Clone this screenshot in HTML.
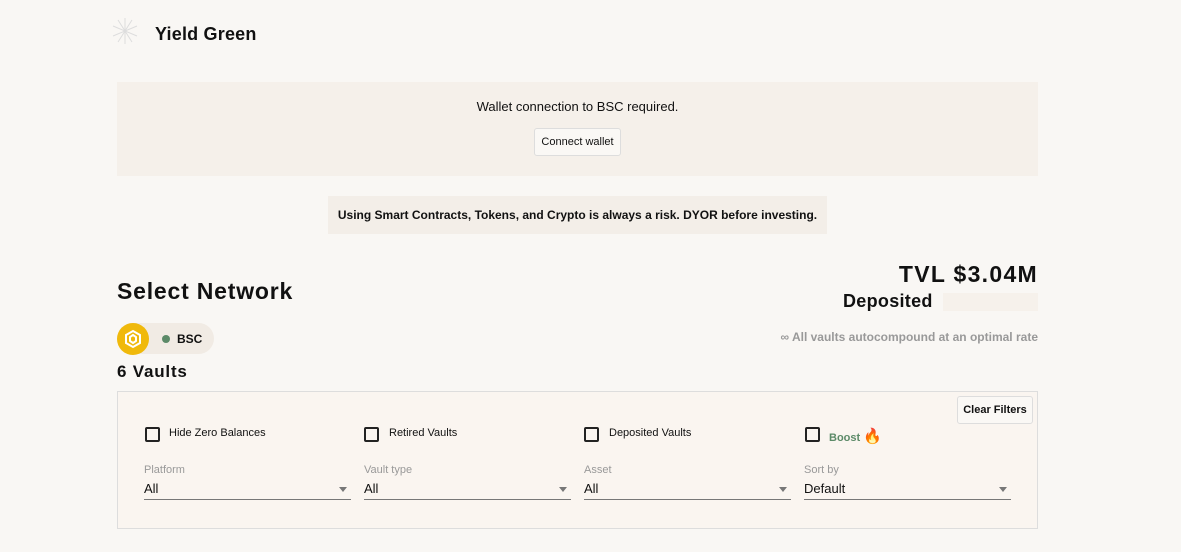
<!DOCTYPE html>
<html><head><meta charset="utf-8"><style>
*{box-sizing:border-box;margin:0;padding:0}
body{width:1181px;height:552px;background:#f9f7f4;font-family:"Liberation Sans",sans-serif;color:#111;position:relative;overflow:hidden}
.a{position:absolute;white-space:nowrap}
.cb{position:absolute;width:15px;height:15px;border:2px solid #222;border-radius:2px}
.lbl{font-size:11px;color:#999}
.sel{position:absolute;width:207px;height:19px;border-bottom:1px solid #777;font-size:13px}
.sel:after{content:"";position:absolute;right:4px;top:6px;border:4px solid transparent;border-top:5px solid #777}
</style></head><body>
<svg class="a" style="left:110px;top:16px" width="30" height="30" viewBox="0 0 30 30" stroke="#ddd" stroke-width="1"><g transform="translate(15,15)"><line x1="0" y1="-13" x2="0" y2="13"/><line x1="-12" y1="-5" x2="12" y2="5"/><line x1="-12" y1="5" x2="12" y2="-5"/><line x1="-7" y1="-11" x2="7" y2="11"/><line x1="-7" y1="11" x2="7" y2="-11"/></g></svg>
<div class="a" style="left:155px;top:24px;font-size:18px;font-weight:bold;letter-spacing:0.2px">Yield Green</div>
<div class="a" style="left:117px;top:82px;width:921px;height:94px;background:#f5f0ea"></div>
<div class="a" style="left:117px;top:99px;width:921px;text-align:center;font-size:13px">Wallet connection to BSC required.</div>
<div class="a" style="left:534px;top:128px;width:87px;height:28px;border:1px solid #ddd;border-radius:3px;background:#faf8f5;font-size:11px;text-align:center;line-height:26px">Connect wallet</div>
<div class="a" style="left:328px;top:196px;width:499px;height:38px;background:#f3eee8;font-size:12px;font-weight:bold;text-align:center;line-height:38px">Using Smart Contracts, Tokens, and Crypto is always a risk. DYOR before investing.</div>
<div class="a" style="left:117px;top:278px;font-size:23px;font-weight:bold;letter-spacing:0.8px">Select Network</div>
<div class="a" style="right:143px;top:261px;font-size:23px;font-weight:bold;letter-spacing:1.3px">TVL $3.04M</div>
<div class="a" style="left:843px;top:291px;font-size:18px;font-weight:bold;letter-spacing:0.3px">Deposited</div>
<div class="a" style="left:943px;top:293px;width:95px;height:18px;background:#f6f1eb"></div>
<div class="a" style="right:143px;top:330px;font-size:12px;font-weight:bold;color:#999">∞ All vaults autocompound at an optimal rate</div>
<div class="a" style="left:117px;top:323px;width:97px;height:31px;border-radius:16px;background:#f1ebe4"></div>
<div class="a" style="left:117px;top:323px;width:32px;height:32px;border-radius:50%;background:#f0b90b"><svg width="32" height="32" viewBox="0 0 32 32" fill="none" stroke="#fff" stroke-width="2"><path d="M16 8l7 4v8l-7 4-7-4v-8z"/><path d="M16 12l3 2v4l-3 2-3-2v-4z"/></svg></div>
<div class="a" style="left:162px;top:335px;width:8px;height:8px;border-radius:50%;background:#5c8a68"></div>
<div class="a" style="left:177px;top:332px;font-size:12px;font-weight:bold">BSC</div>
<div class="a" style="left:117px;top:362px;font-size:17px;font-weight:bold;letter-spacing:0.8px">6 Vaults</div>
<div class="a" style="left:117px;top:391px;width:921px;height:138px;border:1px solid #ddd;background:#faf5f0"></div>
<div class="a" style="left:957px;top:396px;width:76px;height:28px;border:1px solid #ddd;border-radius:3px;background:#faf8f5;font-size:11px;font-weight:bold;text-align:center;line-height:26px">Clear Filters</div>
<div class="cb" style="left:145px;top:427px"></div><div class="a" style="left:169px;top:427px;font-size:11px">Hide Zero Balances</div>
<div class="cb" style="left:364px;top:427px"></div><div class="a" style="left:389px;top:427px;font-size:11px">Retired Vaults</div>
<div class="cb" style="left:584px;top:427px"></div><div class="a" style="left:609px;top:427px;font-size:11px">Deposited Vaults</div>
<div class="cb" style="left:805px;top:427px"></div><div class="a" style="left:829px;top:427px;font-size:11px;font-weight:bold;color:#5c8a68">Boost <span style="font-size:15px">🔥</span></div>
<div class="a lbl" style="left:144px;top:464px">Platform</div><div class="sel" style="left:144px;top:481px">All</div>
<div class="a lbl" style="left:364px;top:464px">Vault type</div><div class="sel" style="left:364px;top:481px">All</div>
<div class="a lbl" style="left:584px;top:464px">Asset</div><div class="sel" style="left:584px;top:481px">All</div>
<div class="a lbl" style="left:804px;top:464px">Sort by</div><div class="sel" style="left:804px;top:481px">Default</div>
</body></html>
